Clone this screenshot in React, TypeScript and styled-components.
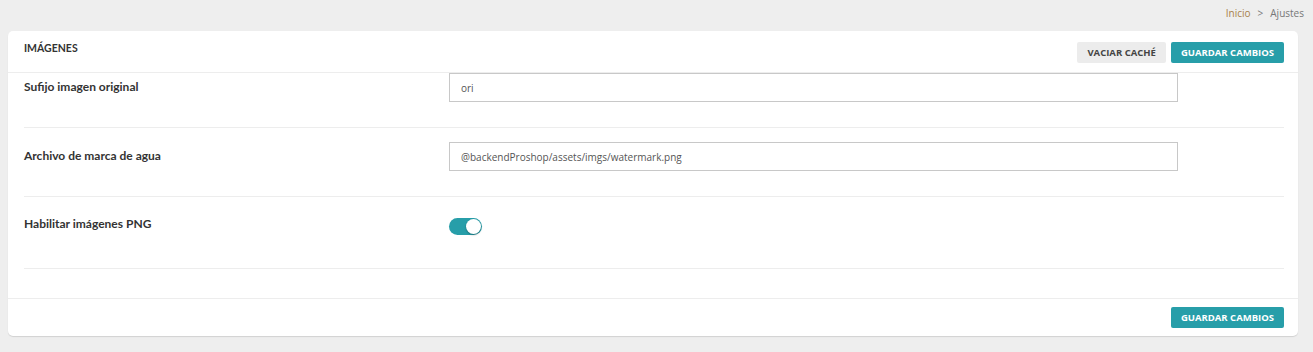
import React from "react";
import styled, { createGlobalStyle } from "styled-components";

const GlobalStyle = createGlobalStyle`
  html, body {
    margin: 0;
    padding: 0;
    background: #eeeeee;
  }
  body {
    font-family: "Open Sans", "Liberation Sans", sans-serif;
    color: #333;
  }
`;

function Toggle({ on }: { on: boolean }) {
  return (
    <ToggleTrack $on={on}>
      <ToggleKnob $on={on} />
    </ToggleTrack>
  );
}

function App() {
  return (
    <Page>
      <GlobalStyle />
      <Breadcrumb>
        <CrumbHome>Inicio</CrumbHome>
        <CrumbSep>&gt;</CrumbSep>
        <span>Ajustes</span>
      </Breadcrumb>
      <Card>
        <CardHeader>
          <CardTitle>IMÁGENES</CardTitle>
          <Actions>
            <Button $variant="light">VACIAR CACHÉ</Button>
            <Button $variant="primary">GUARDAR CAMBIOS</Button>
          </Actions>
        </CardHeader>
        <CardBody>
          <FieldRow $first>
            <Label>Sufijo imagen original</Label>
            <Input defaultValue="ori" />
          </FieldRow>
          <FieldRow>
            <Label>Archivo de marca de agua</Label>
            <Input defaultValue="@backendProshop/assets/imgs/watermark.png" />
          </FieldRow>
          <FieldRow $tall>
            <Label $compact>Habilitar imágenes PNG</Label>
            <ToggleCell>
              <Toggle on />
            </ToggleCell>
          </FieldRow>
        </CardBody>
        <CardFooter>
          <Button $variant="primary">GUARDAR CAMBIOS</Button>
        </CardFooter>
      </Card>
    </Page>
  );
}

const Page = styled.div`
  padding: 0 9px 16px 8px;
`;

const Breadcrumb = styled.div`
  height: 31px;
  display: flex;
  align-items: center;
  justify-content: flex-end;
  gap: 7px;
  padding: 0 0 6px 0;
  font-size: 10px;
  color: #777;
  box-sizing: border-box;
`;

const CrumbHome = styled.span`
  color: #a8814a;
`;

const CrumbSep = styled.span`
  color: #777;
`;

const Card = styled.div`
  margin-right: 6px;
  background: #fff;
  border-radius: 5px;
  box-shadow: 0 1px 1px rgba(0, 0, 0, 0.12);
`;

const CardHeader = styled.div`
  height: 41px;
  display: flex;
  align-items: center;
  justify-content: space-between;
  padding: 0 14px 0 16px;
  border-bottom: 1px solid #ededed;
`;

const CardTitle = styled.div`
  font-family: "Lato", "Liberation Sans", sans-serif;
  font-weight: 700;
  font-size: 10.5px;
  color: #333;
  margin-top: -8px;
`;

const Actions = styled.div`
  display: flex;
  gap: 5px;
  margin-top: 1px;
`;

const Button = styled.button<{ $variant: "light" | "primary" }>`
  font-family: "Open Sans", "Liberation Sans", sans-serif;
  font-weight: 700;
  font-size: 9.5px;
  height: 21px;
  padding: 0 10px;
  border: none;
  border-radius: 2px;
  cursor: pointer;
  background: ${({ $variant }) => ($variant === "primary" ? "#279ea9" : "#ececec")};
  color: ${({ $variant }) => ($variant === "primary" ? "#ffffff" : "#444444")};
`;

const CardBody = styled.div`
  padding: 0 14px 29px 16px;
`;

const FieldRow = styled.div<{ $first?: boolean; $tall?: boolean }>`
  display: grid;
  grid-template-columns: 425px 729px 1fr;
  align-items: start;
  padding: ${({ $first, $tall }) => ($first ? "0 0 25px" : $tall ? "21px 0 33px" : "14px 0 25px")};
  border-bottom: 1px solid #ededed;
`;

const Label = styled.div<{ $compact?: boolean }>`
  font-family: "Lato", "Liberation Sans", sans-serif;
  font-weight: 700;
  font-size: 12px;
  color: #333;
  line-height: ${({ $compact }) => ($compact ? "17px" : "28px")};
  margin-top: ${({ $compact }) => ($compact ? "-3px" : "0")};
`;

const Input = styled.input`
  height: 29px;
  box-sizing: border-box;
  width: 100%;
  border: 1px solid #c8c8c8;
  border-radius: 0;
  padding: 0 11px;
  font-family: "Open Sans", "Liberation Sans", sans-serif;
  font-size: 10px;
  color: #555;
  outline: none;
`;

const ToggleCell = styled.div`
  display: flex;
  align-items: center;
  height: 17px;
`;

const ToggleTrack = styled.div<{ $on: boolean }>`
  position: relative;
  width: 33px;
  height: 17px;
  border-radius: 9px;
  background: ${({ $on }) => ($on ? "#279ea9" : "#ccc")};
`;

const ToggleKnob = styled.div<{ $on: boolean }>`
  position: absolute;
  top: 1px;
  left: ${({ $on }) => ($on ? "17px" : "1px")};
  width: 15px;
  height: 15px;
  border-radius: 50%;
  background: #fff;
  box-shadow: 0 1px 2px rgba(0, 0, 0, 0.3);
`;

const CardFooter = styled.div`
  display: flex;
  justify-content: flex-end;
  align-items: center;
  height: 37px;
  padding: 0 14px;
  border-top: 1px solid #ededed;
`;

export default App;
